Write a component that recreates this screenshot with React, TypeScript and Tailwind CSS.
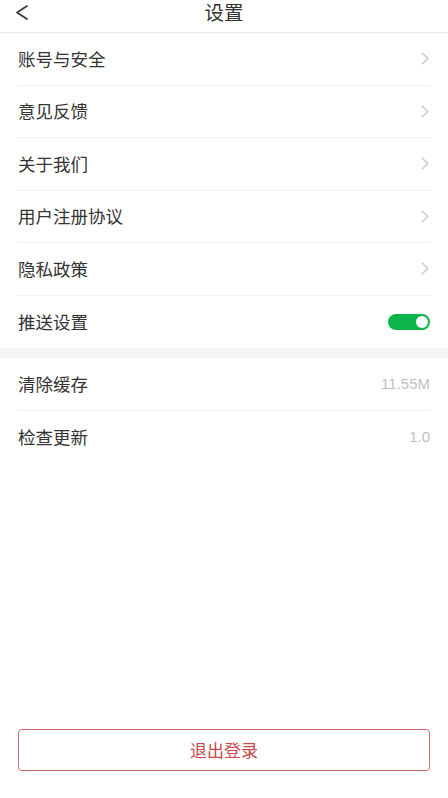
const font = { fontFamily: '"Noto Sans CJK SC", "Liberation Sans", sans-serif' };
const latin = { fontFamily: '"Liberation Sans", sans-serif' };

const Row = ({ label, right, last }: { label: string; right: React.ReactNode; last?: boolean }) => (
  <div className="px-[18px]">
    <div className={`h-[52.5px] flex items-center justify-between ${last ? "" : "border-b border-[#f0f0f0]"}`}>
      <span className="text-[17.5px] text-[#333]">{label}</span>
      {right}
    </div>
  </div>
);

const Arrow = () => (
  <svg width="8" height="13" viewBox="0 0 8 13" fill="none" className="mr-[1px]">
    <polyline points="1,1 7,6.5 1,12" stroke="#c2c2c2" strokeWidth="1.1" strokeLinecap="round" strokeLinejoin="round" />
  </svg>
);

export default function App() {
  return (
    <div className="w-[448px] h-[798px] bg-white flex flex-col" style={font}>
      <div className="h-[33px] relative flex items-start justify-center border-b border-[#ececec]">
        <svg width="12" height="15" viewBox="0 0 12 15" fill="none" className="absolute left-[16px] top-[5px]">
          <polyline points="11,1 1,7.5 11,14" stroke="#333" strokeWidth="1.6" strokeLinecap="round" strokeLinejoin="round" />
        </svg>
        <span className="text-[19.5px] leading-[24px] text-[#333]">设置</span>
      </div>
      <Row label="账号与安全" right={<Arrow />} />
      <Row label="意见反馈" right={<Arrow />} />
      <Row label="关于我们" right={<Arrow />} />
      <Row label="用户注册协议" right={<Arrow />} />
      <Row label="隐私政策" right={<Arrow />} />
      <Row
        label="推送设置"
        last
        right={
          <div className="w-[42px] h-[16px] rounded-full bg-[#0bb54a] flex items-center justify-end pr-[2px]">
            <div className="w-[12px] h-[12px] rounded-full bg-white" />
          </div>
        }
      />
      <div className="h-[10px] bg-[#f5f5f5]" />
      <Row label="清除缓存" right={<span className="text-[15px] text-[#c0c0c0]" style={latin}>11.55M</span>} />
      <Row label="检查更新" last right={<span className="text-[15px] text-[#c0c0c0]" style={latin}>1.0</span>} />
      <div className="flex-1" />
      <div className="px-[18px] pb-[27px]">
        <div className="h-[42px] border border-[#cf6b6f] rounded-[4px] flex items-center justify-center text-[17px] text-[#c8484d]">
          退出登录
        </div>
      </div>
    </div>
  );
}
